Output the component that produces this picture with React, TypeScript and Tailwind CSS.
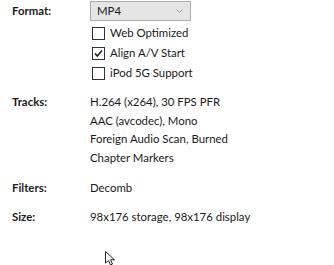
import React from 'react';

function Check({ checked, label }: { checked?: boolean; label: string }) {
  return (
    <div className="flex items-center h-[20px]">
      <span className="w-[13px] h-[13px] border border-[#333333] bg-white flex items-center justify-center ml-[2px]">
        {checked && (
          <svg width="11" height="11" viewBox="0 0 11 11">
            <path d="M2 5.5 L4.3 8 L9 2.5" fill="none" stroke="#222" strokeWidth="1.7" />
          </svg>
        )}
      </span>
      <span className="ml-[5px]">{label}</span>
    </div>
  );
}

export default function App() {
  const tracks = [
    'H.264 (x264), 30 FPS PFR',
    'AAC (avcodec), Mono',
    'Foreign Audio Scan, Burned',
    'Chapter Markers',
  ];

  return (
    <div
      className="relative w-[334px] h-[265px] bg-white text-[#1a1a1a] text-[11.4px] pl-[12px] pt-[1px]"
      style={{ fontFamily: 'Lato, "Noto Sans", sans-serif' }}
    >
      <div className="grid grid-cols-[78px_1fr]">
        <div className="font-bold h-[20px] flex items-center leading-none">Format:</div>
        <div>
          <div className="w-[101px] h-[20px] border border-[#acacac] bg-[#e5e5e5] flex items-center justify-between pl-[6px] pr-[7px] leading-none">
            <span>MP4</span>
            <svg width="7" height="5" viewBox="0 0 7 5">
              <path d="M0.5 0.5 L3.5 3.5 L6.5 0.5" fill="none" stroke="#9a9a9a" strokeWidth="1" />
            </svg>
          </div>
          <div className="mt-[2px]">
            <Check label="Web Optimized" />
            <Check checked label="Align A/V Start" />
            <Check label="iPod 5G Support" />
          </div>
        </div>
      </div>

      <div className="grid grid-cols-[78px_1fr] mt-[10px] leading-[18.7px]">
        <div className="font-bold">Tracks:</div>
        <div>
          {tracks.map((t) => (
            <div key={t}>{t}</div>
          ))}
        </div>
      </div>

      <div className="grid grid-cols-[78px_1fr] mt-[10px] leading-[19px]">
        <div className="font-bold">Filters:</div>
        <div>Decomb</div>
      </div>

      <div className="grid grid-cols-[78px_1fr] mt-[10px] leading-[19px]">
        <div className="font-bold">Size:</div>
        <div>98x176 storage, 98x176 display</div>
      </div>

      <svg className="absolute left-[105px] top-[251px]" width="12" height="15" viewBox="0 0 12 15">
        <path d="M0.5 0.5 L0.5 12 L3.5 9.5 L5.5 14 L7.5 13 L5.5 8.8 L9.5 8.8 Z" fill="#fff" stroke="#222" strokeWidth="1" />
      </svg>
    </div>
  );
}
